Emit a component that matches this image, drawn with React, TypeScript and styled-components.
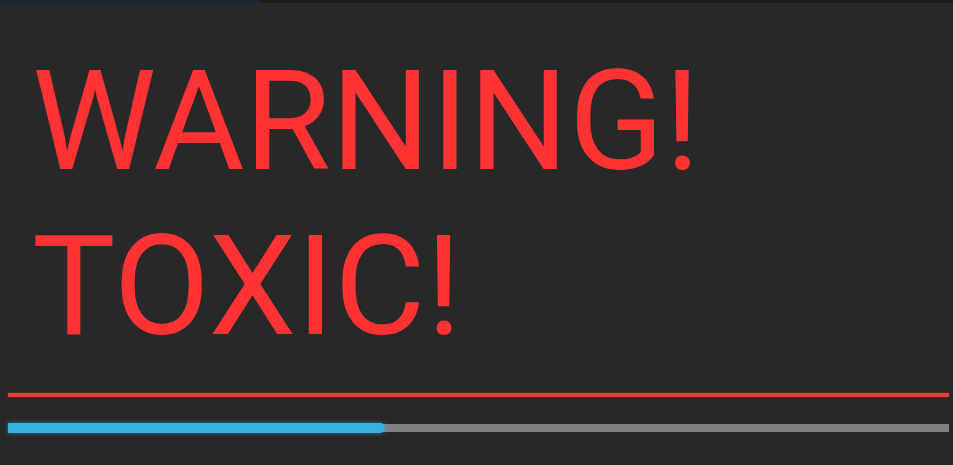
import React from "react";
import styled, { createGlobalStyle } from "styled-components";

const Global = createGlobalStyle`
  html, body {
    margin: 0;
    padding: 0;
    background: #282828;
  }
  body {
    width: 953px;
    height: 465px;
    overflow: hidden;
    font-family: Roboto, "Liberation Sans", sans-serif;
  }
`;

const Screen = styled.div`
  width: 953px;
  height: 465px;
  background: #282828;
  display: flex;
  flex-direction: column;
  box-sizing: border-box;
`;

const TopStrip = styled.div`
  height: 3px;
  display: flex;
`;

const StripPart = styled.div<{ $w: string; $c: string }>`
  width: ${(p) => p.$w};
  background: ${(p) => p.$c};
`;

const Body = styled.div`
  padding: 36px 4px 0 8px;
  display: flex;
  flex-direction: column;
`;

const Warning = styled.div`
  color: #ff3333;
  font-family: Roboto, "Liberation Sans", sans-serif;
  font-size: 140px;
  line-height: 165px;
  font-weight: 400;
  padding-left: 24px;
  white-space: pre-line;
`;

const Divider = styled.div`
  margin-top: 24px;
  height: 4px;
  background: #f03a3a;
  box-shadow: 0 0 2px rgba(255, 50, 50, 0.7);
`;

const Track = styled.div`
  margin-top: 26px;
  height: 10px;
  display: flex;
  align-items: center;
  position: relative;
`;

const Rail = styled.div`
  flex: 1;
  height: 8px;
  background: #818181;
`;

const Fill = styled.div`
  position: absolute;
  left: 0;
  top: 0;
  height: 10px;
  background: #35b1e4;
  border-radius: 0 5px 5px 0;
  box-shadow: 0 0 4px rgba(53, 177, 228, 0.6);
`;

export default function App() {
  const progress = 0.401;
  return (
    <>
      <Global />
      <Screen>
        <TopStrip>
          <StripPart $w="260px" $c="#1b2431" />
          <StripPart $w="693px" $c="#1c1c1c" />
        </TopStrip>
        <Body>
          <Warning>{"WARNING!\nTOXIC!"}</Warning>
          <Divider />
          <Track>
            <Rail />
            <Fill style={{ width: `${progress * 100}%` }} />
          </Track>
        </Body>
      </Screen>
    </>
  );
}
